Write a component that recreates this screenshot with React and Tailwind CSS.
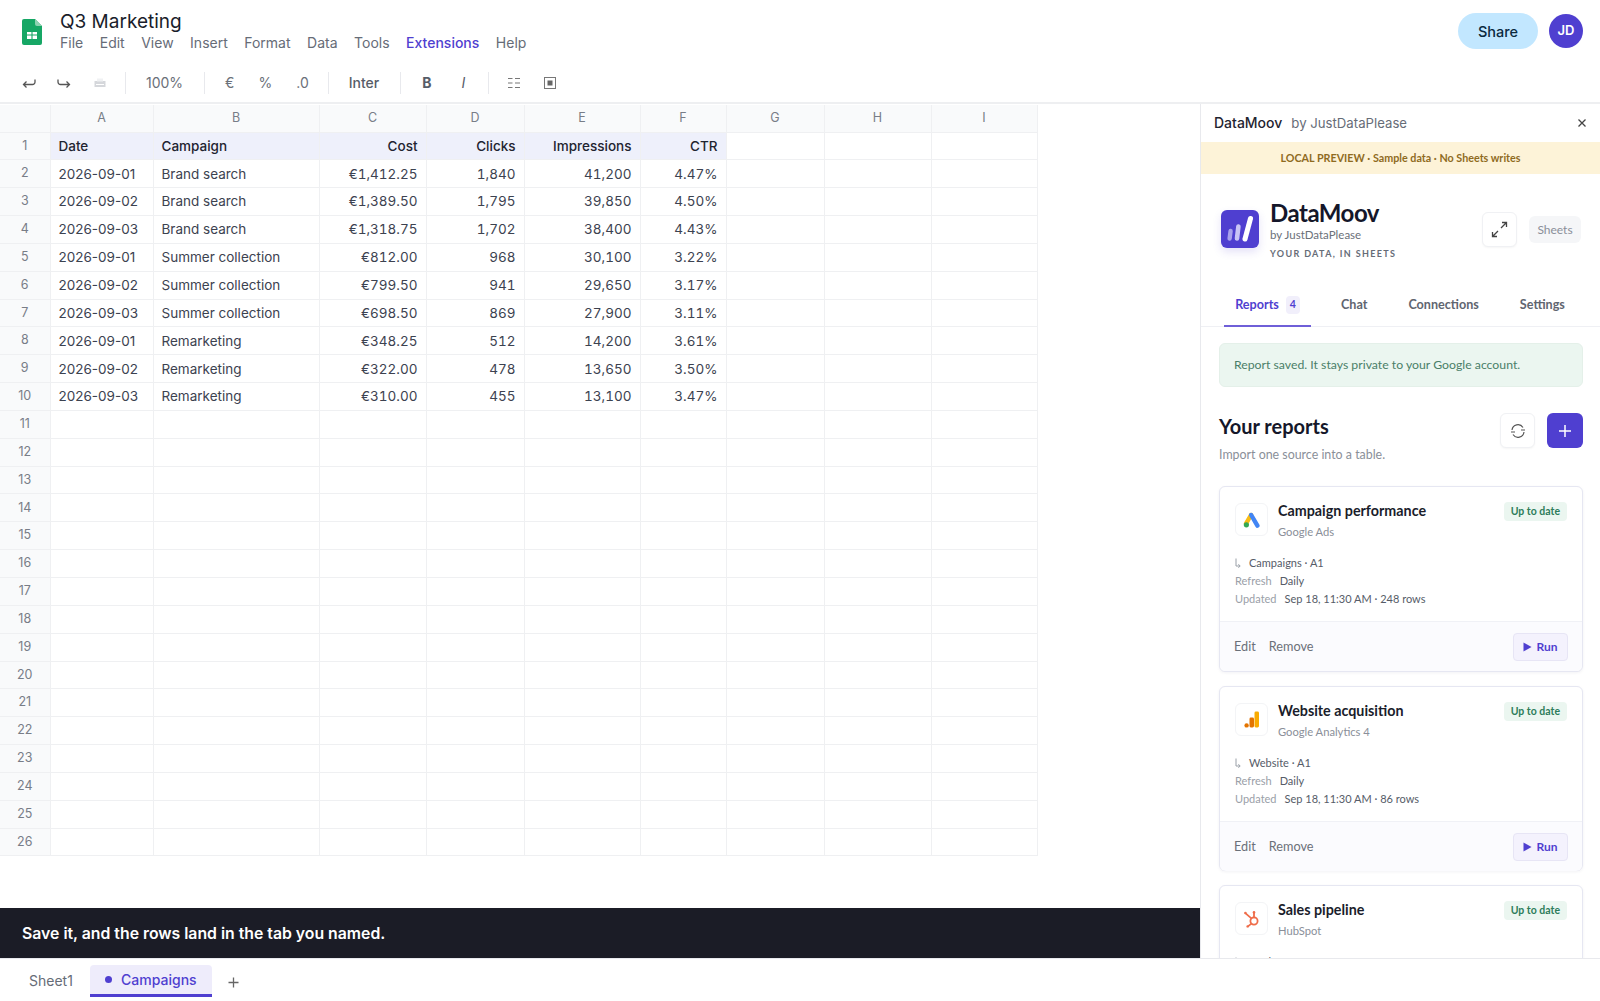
const rows = [
  ["2026-09-01", "Brand search", "€1,412.25", "1,840", "41,200", "4.47%"],
  ["2026-09-02", "Brand search", "€1,389.50", "1,795", "39,850", "4.50%"],
  ["2026-09-03", "Brand search", "€1,318.75", "1,702", "38,400", "4.43%"],
  ["2026-09-01", "Summer collection", "€812.00", "968", "30,100", "3.22%"],
  ["2026-09-02", "Summer collection", "€799.50", "941", "29,650", "3.17%"],
  ["2026-09-03", "Summer collection", "€698.50", "869", "27,900", "3.11%"],
  ["2026-09-01", "Remarketing", "€348.25", "512", "14,200", "3.61%"],
  ["2026-09-02", "Remarketing", "€322.00", "478", "13,650", "3.50%"],
  ["2026-09-03", "Remarketing", "€310.00", "455", "13,100", "3.47%"],
];
const head = ["Date", "Campaign", "Cost", "Clicks", "Impressions", "CTR"];
const menu = ["File", "Edit", "View", "Insert", "Format", "Data", "Tools", "Extensions", "Help"];
const letters = ["A", "B", "C", "D", "E", "F", "G", "H", "I"];

function SheetsLogo() {
  return (
    <svg width="20" height="26" viewBox="0 0 20 26">
      <path d="M2 0h11l7 7v17a2 2 0 0 1-2 2H2a2 2 0 0 1-2-2V2a2 2 0 0 1 2-2z" fill="#16a765" />
      <path d="M13 0l7 7h-5a2 2 0 0 1-2-2z" fill="#8ed1b1" />
      <path d="M5 13h10v7H5z" fill="#fff" />
      <path d="M5 16h10M10 13v7" stroke="#16a765" strokeWidth="1.1" />
    </svg>
  );
}

function Cell({ children, align, bold }) {
  return (
    <div className={`h-[27.85px] flex items-center px-2 border-r border-b border-[#eff0f2] text-[13.5px] whitespace-nowrap ${align ? "justify-end tabular-nums" : ""} ${bold ? "font-medium text-[#1f2430] bg-[#eef0fb]" : "text-[#3c4250]"}`}>
      {children}
    </div>
  );
}

function Grid() {
  const body = [];
  for (let r = 1; r <= 26; r++) {
    const vals = r === 1 ? head : rows[r - 2] || [];
    body.push(
      <div key={"h" + r} className="h-[27.85px] flex items-center justify-center border-r border-b border-[#eff0f2] bg-[#f9fafb] text-[12.5px] text-[#787d87]">
        {r}
      </div>
    );
    for (let c = 0; c < 9; c++) {
      body.push(
        <Cell key={r + "-" + c} align={c >= 2 && c <= 5} bold={r === 1 && c < 6}>
          {vals[c] || ""}
        </Cell>
      );
    }
  }
  return (
    <div className="mt-px grid w-[1037.5px] grid-cols-[50.5px_103px_166px_107px_98px_116px_86px_98px_107px_106px]">
      <div className="h-[27.5px] bg-[#f9fafb] border-r border-b border-[#eff0f2]" />
      {letters.map((l) => (
        <div key={l} className="h-[27.5px] flex items-center justify-center bg-[#f9fafb] border-r border-b border-[#eff0f2] text-[12.5px] text-[#787d87]">
          {l}
        </div>
      ))}
      {body}
    </div>
  );
}

function AdsIcon() {
  return (
    <svg width="18" height="16" viewBox="0 0 18 16">
      <path d="M8 3l-5 8.6" stroke="#f9bc15" strokeWidth="4.4" strokeLinecap="round" />
      <path d="M8.2 3l6.2 10.6" stroke="#4285f4" strokeWidth="4.4" strokeLinecap="round" />
      <circle cx="3.4" cy="12.8" r="2.6" fill="#34a853" />
    </svg>
  );
}
function GaIcon() {
  return (
    <svg width="16" height="17" viewBox="0 0 16 17">
      <rect x="10.5" y="0.5" width="4.5" height="16" rx="1.4" fill="#f9ab00" />
      <rect x="5.5" y="6.5" width="4.5" height="10" rx="1.4" fill="#e37400" />
      <circle cx="2.6" cy="14.4" r="2.2" fill="#e37400" />
    </svg>
  );
}
function HubIcon() {
  return (
    <svg width="18" height="18" viewBox="0 0 18 18" fill="none" stroke="#ef6d4a" strokeWidth="1.8">
      <circle cx="11" cy="11" r="3.6" />
      <path d="M8.4 8.4L2.6 3.4M11 7.4V3.2M8.4 13.6L5 16.4" strokeLinecap="round" />
      <circle cx="2.4" cy="3" r="1.3" fill="#ef6d4a" stroke="none" />
      <circle cx="11" cy="2.4" r="1.3" fill="#ef6d4a" stroke="none" />
      <circle cx="4.6" cy="16.4" r="1.2" fill="#ef6d4a" stroke="none" />
    </svg>
  );
}
function TabArrow() {
  return (
    <svg className="mr-[8px] mt-[4px]" width="6" height="11" viewBox="0 0 6 11" fill="none" stroke="#9aa0a8" strokeWidth="1"><path d="M1 0.5v7.5h4M3.4 6.2L5.2 8 3.4 9.8" /></svg>
  );
}

function ReportCard({ title, source, icon, tab, updated, h }) {
  return (
    <div className={`mb-[14px] shrink-0 rounded-md border border-[#e6e7f2] bg-white shadow-[0_1px_3px_rgba(30,30,80,0.06)] ${h}`}>
      <div className="relative h-[134px] pl-[15px] pr-[15px] pt-[16px]">
        <div className="flex">
          <div className="flex h-[33px] w-[33px] items-center justify-center rounded-md border border-[#f3f4f6] bg-white">
            {icon}
          </div>
          <div className="ml-[10px] flex-1">
            <div className="text-[14.3px] font-bold leading-[20px] text-[#1a1d2b] -mt-[2px]">{title}</div>
            <div className="mt-[2px] text-[11.2px] leading-[18px] text-[#8a8f99]">{source}</div>
          </div>
          <div className="h-[19px] -mt-[1px] rounded bg-[#ebf6f0] px-[7px] text-[10.5px] font-bold leading-[19px] text-[#2e7d5b]">Up to date</div>
        </div>
        <div className="mt-[13px] text-[11px] leading-[18px] text-[#565c68]">
          <div className="flex"><TabArrow />{tab} · A1</div>
          <div className="flex gap-[8px]"><span className="text-[#9aa0a8]">Refresh</span><span>Daily</span></div>
          <div className="flex gap-[8px]"><span className="text-[#9aa0a8]">Updated</span><span>{updated}</span></div>
        </div>
      </div>
      <div className="flex h-[50px] items-center justify-between rounded-b-md border-t border-[#f0f1f6] bg-[#fbfbfe] pl-[14px] pr-[14px]">
        <div className="flex gap-[13px] text-[12.7px] text-[#6b7079]">
          <span>Edit</span>
          <span>Remove</span>
        </div>
        <div className="flex h-[28px] w-[55px] items-center justify-center gap-[4px] rounded border border-[#e7e5f5] bg-[#f4f2fd] text-[12px] font-bold text-[#4f3fd0]">
          <svg width="9" height="10" viewBox="0 0 9 10"><path d="M0.5 0.5L8.5 5L0.5 9.5z" fill="#4f3fd0" /></svg>
          Run
        </div>
      </div>
    </div>
  );
}

function Panel() {
  return (
    <aside className="flex h-full w-[400px] shrink-0 flex-col overflow-hidden border-l border-[#e8e9ed] bg-white">
      <div className="flex h-[38px] shrink-0 items-center justify-between pl-[13px] pr-[13px]">
        <div className="flex items-baseline gap-[9px]">
          <span className="text-[14px] font-medium text-[#1f2430]">DataMoov</span>
          <span className="text-[13.2px] text-[#666c77]">by JustDataPlease</span>
        </div>
        <svg width="10" height="10" viewBox="0 0 10 10" stroke="#444" strokeWidth="1.3"><path d="M1.5 1.5l7 7M8.5 1.5l-7 7" /></svg>
      </div>
      <div className="flex h-[32px] shrink-0 items-center justify-center bg-[#fdf3d8] pt-px font-['Lato',sans-serif] text-[10.75px] font-bold text-[#8f6b1f]">
        LOCAL PREVIEW · Sample data · No Sheets writes
      </div>
      <div className="flex h-[110px] shrink-0 pl-[20px] pr-[19px] pt-[20px] font-['Lato',sans-serif]">
        <div className="mt-[16px] h-[38px] w-[38px] shrink-0 overflow-hidden rounded-md bg-[#4f3fd0] shadow-[0_4px_8px_rgba(79,63,208,0.15)]">
          <svg width="38" height="38" viewBox="0 0 38 38" strokeLinecap="round" fill="none">
            <path d="M9.6 21L8.6 28.5" stroke="#a9a1ec" strokeWidth="4.4" />
            <path d="M17.4 16.5L16 28.5" stroke="#c9c4f5" strokeWidth="4.6" />
            <path d="M29.5 8.5L24 29" stroke="#fff" strokeWidth="5" />
          </svg>
        </div>
        <div className="ml-[11px] flex-1">
          <div className="mt-[4px] text-[24px] font-bold leading-[30px] tracking-[-0.5px] text-[#15172a]">DataMoov</div>
          <div className="-mt-px text-[11.5px] leading-[16px] text-[#6b7079]">by JustDataPlease</div>
          <div className="mt-[3px] text-[9px] font-bold leading-[16px] tracking-[1.35px] text-[#666c77]">YOUR DATA, IN SHEETS</div>
        </div>
        <div className="mt-[18px] flex h-[35px] w-[35px] items-center justify-center rounded-md border border-[#f0f1f4] bg-white shadow-[0_1px_2px_rgba(0,0,0,0.04)]">
          <svg width="17" height="17" viewBox="0 0 17 17" fill="none" stroke="#444" strokeWidth="1.3"><path d="M10 7l5.5-5.5M11 1.5h4.5V6M7 10l-5.5 5.5M6 15.5H1.5V11" /></svg>
        </div>
        <div className="ml-[12px] mt-[22px] flex h-[27px] w-[52px] items-center justify-center rounded-md bg-[#f5f6f8] text-[12px] text-[#8a8f99]">Sheets</div>
      </div>
      <div className="flex h-[43px] shrink-0 items-stretch border-b border-[#eff0f4] pl-[23px] pt-px font-['Lato',sans-serif] text-[12.6px] font-bold text-[#5f6570]">
        <div className="flex w-[87px] items-center justify-center gap-[7px] border-b-2 border-[#6f5fd8] text-[#4f3fd0] -mb-px">
          Reports
          <span className="flex h-[18px] w-[14px] items-center justify-center rounded bg-[#f1effb] text-[10.5px]">4</span>
        </div>
        <div className="ml-[30px] flex items-center">Chat</div>
        <div className="ml-[41px] flex items-center">Connections</div>
        <div className="ml-[41px] flex items-center">Settings</div>
      </div>
      <div className="flex min-h-0 flex-1 flex-col overflow-hidden pl-[18px] pr-[17px] pt-[16px] font-['Lato',sans-serif]">
        <div className="flex h-[44px] shrink-0 items-center rounded-md border border-[#e4f0e9] bg-[#ebf6f0] pl-[14px] text-[12.25px] text-[#4a7f68]">
          Report saved. It stays private to your Google account.
        </div>
        <div className="mt-[26px] flex h-[35px] shrink-0 items-start justify-between">
          <div className="-mt-px text-[20px] font-bold leading-[28px] text-[#15172a]">Your reports</div>
          <div className="flex gap-[12px]">
            <div className="flex h-[35px] w-[35px] items-center justify-center rounded-md border border-[#f0f1f4] bg-white shadow-[0_1px_2px_rgba(0,0,0,0.04)]">
              <svg width="16" height="16" viewBox="0 0 16 16" fill="none" stroke="#555" strokeWidth="1.2"><path d="M2 7a6 6 0 0 1 11-2.5M14 9a6 6 0 0 1-11 2.5M11 7h4M1 9h4" /></svg>
            </div>
            <div className="flex h-[35px] w-[36px] items-center justify-center rounded-md bg-[#4f3fd0]">
              <svg width="14" height="14" viewBox="0 0 14 14" stroke="#fff" strokeWidth="1.5"><path d="M7 1v12M1 7h12" /></svg>
            </div>
          </div>
        </div>
        <div className="mt-[-2px] shrink-0 text-[12.4px] leading-[18px] text-[#8a8f99]">Import one source into a table.</div>
        <div className="mt-[22px] flex flex-col">
          <ReportCard title="Campaign performance" source="Google Ads" icon={<AdsIcon />} tab="Campaigns" updated="Sep 18, 11:30 AM · 248 rows" h="h-[186px]" />
          <ReportCard title="Website acquisition" source="Google Analytics 4" icon={<GaIcon />} tab="Website" updated="Sep 18, 11:30 AM · 86 rows" h="h-[185px]" />
          <ReportCard title="Sales pipeline" source="HubSpot" icon={<HubIcon />} tab="Deals" updated="Sep 18, 11:30 AM · 412 rows" h="h-[184px]" />
        </div>
      </div>
    </aside>
  );
}

export default function App() {
  return (
    <div className="flex h-[1001px] w-[1600px] flex-col overflow-hidden bg-white font-['Inter',sans-serif]">
      <header className="h-[104px] shrink-0 border-b-2 border-[#eeeff1]">
        <div className="flex h-[63px] items-start justify-between pr-[17px]">
          <div className="flex">
            <div className="ml-[22px] mt-[19px]"><SheetsLogo /></div>
            <div className="ml-[18px] mt-[9px]">
              <div className="text-[19px] leading-[25px] text-[#1a1d2b]">Q3 Marketing</div>
              <div className="flex gap-[16.5px] text-[14px] leading-[18px] text-[#666c77]">
                {menu.map((m) => (
                  <span key={m} className={m === "Extensions" ? "font-medium text-[#4f3fd0]" : ""}>{m}</span>
                ))}
              </div>
            </div>
          </div>
          <div className="mt-[13px] flex items-center gap-[11px]">
            <div className="flex h-[36px] w-[80px] items-center justify-center rounded-full bg-[#c2e7ff] pt-px text-[14.5px] font-medium text-[#0b2a3f]">Share</div>
            <div className="flex h-[34px] w-[34px] items-center justify-center rounded-full bg-[#4f3fd0] text-[13px] font-semibold text-white">JD</div>
          </div>
        </div>
        <div className="flex h-[39px] items-center text-[#6b7079]">
          <svg className="ml-[22px]" width="14" height="12" viewBox="0 0 14 12" fill="none" stroke="#555" strokeWidth="1.3"><path d="M13 2.5v2.5a2.5 2.5 0 0 1-2.5 2.5H1.5M4.5 4.5L1.5 7.5l3 3" /></svg>
          <svg className="ml-[21px]" width="14" height="12" viewBox="0 0 14 12" fill="none" stroke="#555" strokeWidth="1.3"><path d="M1 2.5v2.5a2.5 2.5 0 0 0 2.5 2.5h9M9.5 4.5l3 3-3 3" /></svg>
          <svg className="ml-[23px]" width="12" height="10" viewBox="0 0 12 10"><rect x="0.5" y="3" width="11" height="6" fill="#d5d7db" /><rect x="3" y="0.5" width="6" height="3" fill="#f0f1f3" /><path d="M2 6.5h8" stroke="#fff" /></svg>
          <div className="ml-[19px] h-[22px] w-px bg-[#e8e9ed]" />
          <span className="ml-[20px] text-[14px]">100%</span>
          <div className="ml-[21px] h-[22px] w-px bg-[#e8e9ed]" />
          <span className="ml-[20px] text-[14px]">€</span>
          <span className="ml-[24px] text-[14px]">%</span>
          <span className="ml-[24px] text-[14px]">.0</span>
          <div className="ml-[19px] h-[22px] w-px bg-[#e8e9ed]" />
          <span className="ml-[20px] text-[14px] font-medium text-[#565c68]">Inter</span>
          <div className="ml-[21px] h-[22px] w-px bg-[#e8e9ed]" />
          <span className="ml-[21px] text-[14px] font-bold text-[#565c68]">B</span>
          <span className="ml-[30px] text-[14px] italic text-[#565c68]">I</span>
          <div className="ml-[23px] h-[22px] w-px bg-[#e8e9ed]" />
          <svg className="ml-[19px]" width="12" height="12" viewBox="0 0 12 12" stroke="#777" strokeWidth="1"><path d="M0 1.5h4.5M7 1.5h5M0 6h4.5M7 6h5M0 10.5h4.5M7 10.5h5" /></svg>
          <svg className="ml-[24px]" width="12" height="12" viewBox="0 0 12 12"><rect x="0.5" y="0.5" width="11" height="11" fill="none" stroke="#777" /><rect x="3.5" y="3.5" width="5" height="5" fill="#666" /></svg>
        </div>
      </header>
      <div className="flex min-h-0 flex-1">
        <main className="flex min-w-0 flex-1 flex-col">
          <div className="min-h-0 flex-1 overflow-hidden"><Grid /></div>
          <div className="flex h-[50px] shrink-0 items-center bg-[#1b1c26] pl-[22px] pt-px text-[15.8px] font-semibold text-white">
            Save it, and the rows land in the tab you named.
          </div>
        </main>
        <Panel />
      </div>
      <footer className="flex h-[43px] shrink-0 items-start border-t border-[#e8e9ed] bg-white">
        <span className="ml-[29px] mt-[11px] text-[14px] text-[#666c77]">Sheet1</span>
        <div className="ml-[17px] mt-[6px] flex h-[32px] w-[122px] items-center justify-center gap-[9px] rounded-t-sm border-b-[3px] border-[#4f3fd0] bg-[#eeecfb] text-[14px] font-medium text-[#4f3fd0]">
          <span className="h-[7px] w-[7px] rounded-full bg-[#4f3fd0]" />
          Campaigns
        </div>
        <svg className="ml-[16px] mt-[18px]" width="11" height="11" viewBox="0 0 11 11" stroke="#666" strokeWidth="1.3"><path d="M5.5 0.5v10M0.5 5.5h10" /></svg>
      </footer>
    </div>
  );
}
